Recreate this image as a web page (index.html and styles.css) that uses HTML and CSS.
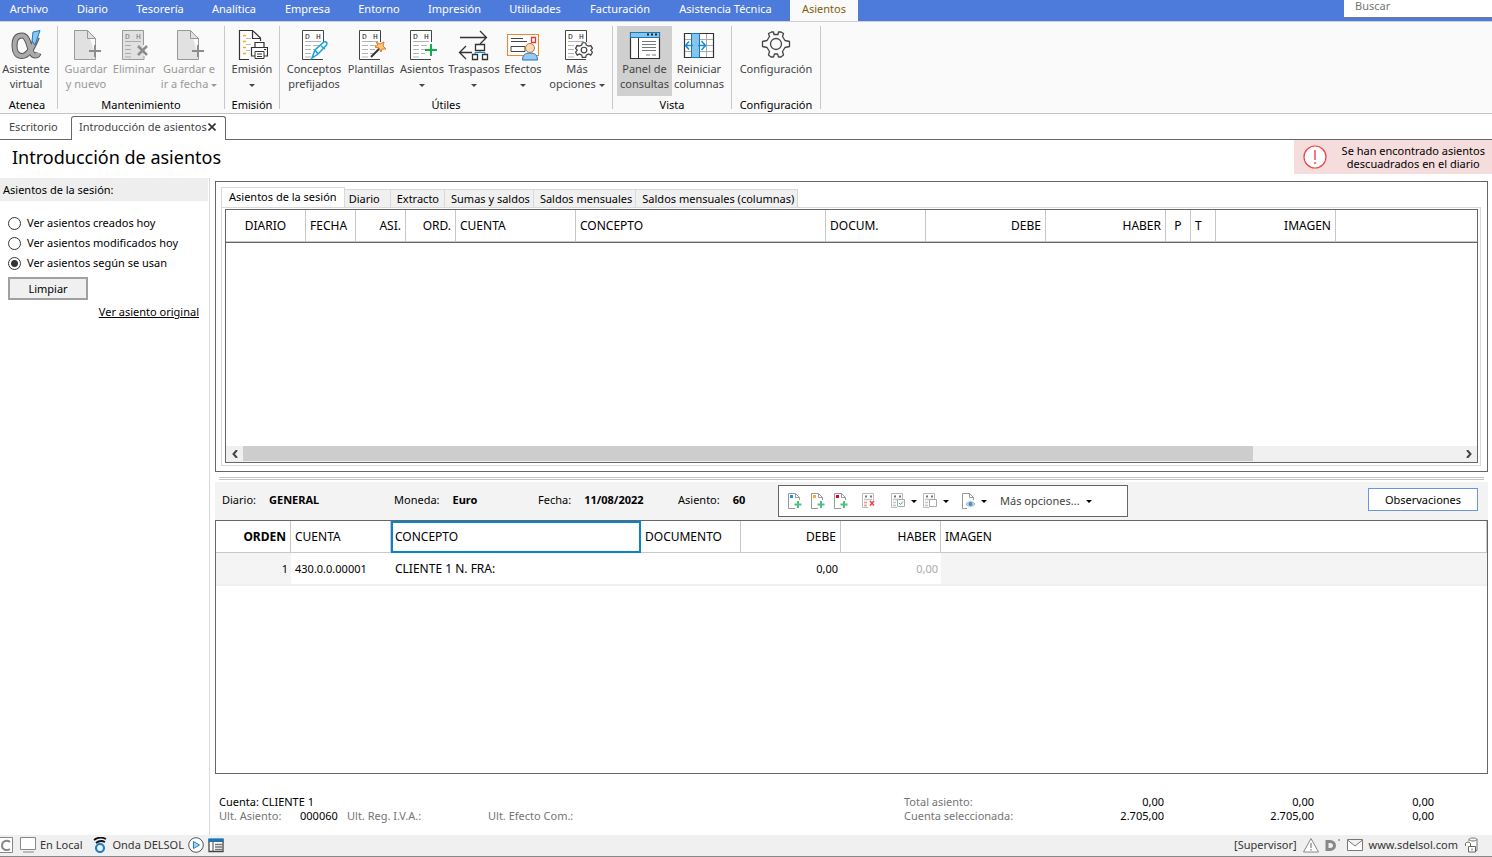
FILE: index.html
```html
<!DOCTYPE html>
<html lang="es">
<head>
<meta charset="utf-8">
<title>Introducción de asientos</title>
<link rel="stylesheet" href="styles.css">
</head>
<body>
<svg class="defs" aria-hidden="true">
  <defs>
    <symbol id="ledger" viewBox="0 0 32 32">
      <path d="M25.500 13V1.500H4.500V30.500H25" fill="#fff" stroke="#444"/>
      <path d="M7 12.500H23M7 16.500H13M15 16.500H21M7 20.500H13M15 20.500H20M7 24.500H13M15 24.500H19M7 28H13" stroke="#b4b4b4" fill="none"/>
      <text x="7" y="10" class="mini">D</text><text x="18" y="10" class="mini">H</text>
    </symbol>
    <symbol id="savedoc" viewBox="0 0 32 32">
      <path d="M17.500 1.500H4.500V30.500H25.500V27M25.500 18V9.500L17.500 1.500V9.500H25.500" fill="#e1e1e1" stroke="#999"/>
      <path d="M25 16V28M19 22H31" stroke="#8c8c8c" stroke-width="2"/>
    </symbol>
    <symbol id="gear" viewBox="0 0 32 32">
      <path d="M11.500 3H13.500L14 5.500H18L18.500 3H21L23.500 4.500L22.500 7.500L25 11.500L29.500 12.500V17.500L25 18.500L22.500 22.500L23.500 26L21 28H18.500L17.500 25H14.500L13.500 28H11L8.500 26L9.500 22.500L7 18.500L2.500 17.500V12.500L7 11.500L9.500 7.500L8.500 4.500Z" fill="none" stroke="#444" stroke-width="1.300" stroke-linejoin="round"/>
      <circle cx="16" cy="15" r="5.500" fill="none" stroke="#444" stroke-width="1.300"/>
    </symbol>
    <symbol id="newline" viewBox="0 0 18 18">
      <path d="M9.500 1.500H2.500V16.500H9M13.500 8V5.500L9.500 1.500V5.500H13.500" fill="#fff" stroke="#999"/>
      <path d="M12 9V16M8.500 12.500H15.500" stroke="#4fc07e" stroke-width="2"/>
    </symbol>
    <symbol id="rows" viewBox="0 0 18 18">
      <path d="M12.500 8V1.500H1.500V15.500H7" fill="#fff" stroke="#bbb"/>
      <path d="M4 4.500H6M9 4.500H11" stroke="#777" stroke-width="2"/>
      <path d="M3 7.500H11M3 10.500H6M3 13.500H6" stroke="#c4c4c4" stroke-width="1.500"/>
    </symbol>
  </defs>
</svg>

<nav class="menu">
  <div class="menu-items">
    <a href="#">Archivo</a><a href="#">Diario</a><a href="#">Tesorería</a><a href="#">Analítica</a><a href="#">Empresa</a><a href="#">Entorno</a><a href="#">Impresión</a><a href="#">Utilidades</a><a href="#">Facturación</a><a href="#">Asistencia Técnica</a><a href="#" class="current">Asientos</a>
  </div>
  <input class="search" type="text" placeholder="Buscar" aria-label="Buscar">
</nav>

<div class="ribbon">
  <section class="group g-atenea">
    <div class="tools">
      <button class="tool"><svg viewBox="0 0 32 32"><path d="M27 8C22 20 18 27 12 27C7 27 4.500 23 4.500 16.500C4.500 10 7 6.500 12 6.500C20 6.500 19 26.500 25 26.500C27 26.500 28 25.500 28.500 24" fill="none" stroke="#555" stroke-width="6"/><path d="M27 8C22 20 18 27 12 27C7 27 4.500 23 4.500 16.500C4.500 10 7 6.500 12 6.500C20 6.500 19 26.500 25 26.500C27 26.500 28 25.500 28.500 24" fill="none" stroke="#aaa" stroke-width="4"/><path d="M23 3L30 1.500L25 16L22 12Z" fill="#8cc6f0" stroke="#1978b8"/></svg><span>Asistente<br>virtual</span></button>
    </div>
    <h2>Atenea</h2>
  </section>
  <section class="group g-mant">
    <div class="tools">
      <button class="tool off" disabled><svg><use href="#savedoc"/></svg><span>Guardar<br>y nuevo</span></button>
      <button class="tool off" disabled><svg viewBox="0 0 32 32"><path d="M25.500 16V1.500H4.500V30.500H26V27" fill="#e1e1e1" stroke="#999"/><path d="M7 12.500H23M7 16.500H13M7 20.500H13M7 24.500H13M7 28H13" stroke="#aaa"/><text x="7" y="10" class="mini dim">D</text><text x="18" y="10" class="mini dim">H</text><path d="M20 17L29 26M29 17L20 26" stroke="#8c8c8c" stroke-width="2.500"/></svg><span>Eliminar</span></button>
      <button class="tool off" disabled><svg><use href="#savedoc"/></svg><span>Guardar e<br>ir a fecha <i class="caret"></i></span></button>
    </div>
    <h2>Mantenimiento</h2>
  </section>
  <section class="group g-emision">
    <div class="tools">
      <button class="tool"><svg viewBox="0 0 32 32"><path d="M13 30.500H3.500V1.500H16.500L24.500 9V12M16.500 1.500V9.500H24.500" fill="#fff" stroke="#333" stroke-width="1.200"/><path d="M7 6.500H10M7 12.500H10M7 18.500H10M7 24.500H10" stroke="#f5a623" stroke-width="1.500"/><path d="M10 9.500H15M10 15.500H15M10 21.500H14" stroke="#bbb"/><path d="M19 18V13.500H28V18M19 27H15.500V18.500H31.500V27H28" fill="#fff" stroke="#333" stroke-width="1.200"/><path d="M19 22.500H28V29.500H19ZM21 25H26M21 27.500H26M28 20.500H30" fill="#fff" stroke="#333"/></svg><span>Emisión<br><i class="caret"></i></span></button>
    </div>
    <h2>Emisión</h2>
  </section>
  <section class="group g-utiles">
    <div class="tools">
      <button class="tool"><svg viewBox="0 0 32 32"><use href="#ledger"/><path d="M14 29L17 21L26 13C28 12 30 14 28.500 16L20 25ZM23 17L27 20M17 21L20 25" fill="#fff" stroke="#17a2dc" stroke-width="1.500"/></svg><span>Conceptos<br>prefijados</span></button>
      <button class="tool"><svg viewBox="0 0 32 32"><use href="#ledger"/><path d="M16 28L25 19" stroke="#333" stroke-width="2"/><path d="M21 13L25 15L29 13L28 17L31 20L27 20L26 23L24 19L20 18L23 16Z" fill="#ffc680" stroke="#e8741a"/></svg><span>Plantillas</span></button>
      <button class="tool"><svg viewBox="0 0 32 32"><use href="#ledger"/><path d="M25 15V27M19 21H31" stroke="#12ad4b" stroke-width="2"/></svg><span>Asientos<br><i class="caret"></i></span></button>
      <button class="tool"><svg viewBox="0 0 32 32"><path d="M2 8.500H28M22 2L28.500 8.500L22 15M14 23.500H2M8 17L1.500 23.500L8 30" fill="none" stroke="#333" stroke-width="1.300"/><path d="M17.500 15.500H26.500V21.500H17.500ZM14.500 25.500H19.500V30.500H14.500ZM24.500 25.500H29.500V30.500H24.500Z" fill="#fff" stroke="#333" stroke-width="1.300"/><path d="M17 25V23.500H27V25M22 22V23.500" fill="none" stroke="#178bd3"/></svg><span>Traspasos<br><i class="caret"></i></span></button>
      <button class="tool"><svg viewBox="0 0 32 32"><path d="M.5 5.500H31.500V26.500H.5Z" fill="#fff" stroke="#e98a2f" stroke-width="1.200"/><path d="M4 9.500H16M4 12.500H20M4 17.500H18V22.500H4Z" fill="none" stroke="#444"/><path d="M24.500 8.500H28.500V13.500H24.500Z" fill="#fff" stroke="#e33" stroke-width="1.300"/><path d="M15.500 31C15.500 26 18 24 23 24C28 24 30.500 26 30.500 31Z" fill="#9ac8ee" stroke="#1976b8"/><circle cx="23" cy="19" r="4.500" fill="#fbd9b4" stroke="#aa7948"/></svg><span>Efectos<br><i class="caret"></i></span></button>
      <button class="tool"><svg viewBox="0 0 32 32"><use href="#ledger"/><circle cx="23" cy="20" r="7" fill="#fff"/><svg x="14" y="11" width="18" height="19" viewBox="0 0 32 32"><path d="M13 4H19L20 8L24 10L28 9L31 14L28 17L31 21L28 26L24 24L20 26L19 30H13L12 26L8 24L4 26L1 21L4 17L1 14L4 9L8 10L12 8Z" fill="#fff" stroke="#444" stroke-width="2.200"/><circle cx="16" cy="17" r="5" fill="none" stroke="#444" stroke-width="2.200"/></svg></svg><span>Más<br>opciones <i class="caret"></i></span></button>
    </div>
    <h2>Útiles</h2>
  </section>
  <section class="group g-vista">
    <div class="tools">
      <button class="tool pressed"><svg viewBox="0 0 32 32"><path d="M1.500 3.500H30.500V29.500H1.500Z" fill="#fff" stroke="#333" stroke-width="1.200"/><path d="M1.500 3.500H30.500V8.500H1.500Z" fill="#84c4ee" stroke="#1978b8"/><path d="M9.500 9V29" stroke="#333"/><path d="M18 5.500H20M22 5.500H24M26 5.500H28" stroke="#222" stroke-width="2"/><path d="M13 12.500H27M13 15.500H27M13 18.500H27M13 21.500H27M17 26H21M23 26H27" stroke="#777"/></svg><span>Panel de<br>consultas</span></button>
      <button class="tool"><svg viewBox="0 0 32 32"><path d="M1.500 4.500H30.500V28.500H1.500Z" fill="#fff" stroke="#333" stroke-width="1.200"/><path d="M2 10.500H30M2 16.500H30M2 22.500H30M23.500 5V28" stroke="#aaa"/><path d="M8.500 4.500H16.500V28.500H8.500Z" fill="#84c4ee" stroke="#1978b8"/><path d="M10 16.500H3M6 12.500L2.500 16.500L6 20.500M15 16.500H22M18.500 12L22.500 16.500L18.500 21" fill="none" stroke="#178bd3" stroke-width="1.500"/></svg><span>Reiniciar<br>columnas</span></button>
    </div>
    <h2>Vista</h2>
  </section>
  <section class="group g-config">
    <div class="tools">
      <button class="tool"><svg><use href="#gear"/></svg><span>Configuración</span></button>
    </div>
    <h2>Configuración</h2>
  </section>
</div>

<div class="doc-tabs">
  <a href="#" class="doc-tab">Escritorio</a>
  <div class="doc-tab active"><span>Introducción de asientos</span><button class="close" aria-label="Cerrar"><svg viewBox="0 0 8 8"><path d="M.5 .5L7.500 7.500M7.500 .5L.5 7.500" stroke="#333" stroke-width="1.600"/></svg></button></div>
  <div class="doc-rest"></div>
</div>

<header class="heading">
  <h1>Introducción de asientos</h1>
  <div class="alert" role="alert">
    <svg viewBox="0 0 24 24"><circle cx="12" cy="12" r="11" fill="#fff" stroke="#f0443e" stroke-width="1.200"/><path d="M12 5V15M12 17V19" stroke="#f0443e" stroke-width="1.400"/></svg>
    <p>Se han encontrado asientos<br>descuadrados en el diario</p>
  </div>
</header>

<div class="workspace">
  <aside class="side">
    <h2>Asientos de la sesión:</h2>
    <div class="options">
      <label><input type="radio" name="ver">Ver asientos creados hoy</label>
      <label><input type="radio" name="ver">Ver asientos modificados hoy</label>
      <label><input type="radio" name="ver" checked>Ver asientos según se usan</label>
    </div>
    <button class="clear">Limpiar</button>
    <a class="original" href="#">Ver asiento original</a>
  </aside>

  <main>
    <section class="session">
      <div class="tabs">
        <button class="on">Asientos de la sesión</button><button class="t-diario">Diario</button><button class="t-extracto">Extracto</button><button>Sumas y saldos</button><button>Saldos mensuales</button><button>Saldos mensuales (columnas)</button>
      </div>
      <div class="tab-page">
        <div class="grid-frame">
          <table class="grid">
            <colgroup><col class="c80"><col class="c50"><col class="c50"><col class="c50"><col class="c120"><col class="c250"><col class="c100"><col class="c120"><col class="c120"><col class="c25"><col class="c25"><col class="c120"><col></colgroup>
            <thead><tr><th class="mid">DIARIO</th><th>FECHA</th><th class="num">ASI.</th><th class="num">ORD.</th><th>CUENTA</th><th>CONCEPTO</th><th>DOCUM.</th><th class="num">DEBE</th><th class="num">HABER</th><th class="mid">P</th><th>T</th><th class="num">IMAGEN</th><th class="last"></th></tr></thead>
          </table>
          <div class="scroll">
            <button aria-label="Izquierda"><svg viewBox="0 0 8 8"><path d="M6 0L2.500 4L6 8" fill="none" stroke="#444" stroke-width="2"/></svg></button>
            <div class="track"><div class="thumb"></div></div>
            <button aria-label="Derecha"><svg viewBox="0 0 8 8"><path d="M2 0L5.500 4L2 8" fill="none" stroke="#444" stroke-width="2"/></svg></button>
          </div>
        </div>
      </div>
    </section>

    <div class="splitter"></div>

    <section class="entry-bar">
      <dl>
        <div><dt>Diario:</dt><dd>GENERAL</dd></div>
        <div><dt>Moneda:</dt><dd>Euro</dd></div>
        <div><dt>Fecha:</dt><dd>11/08/2022</dd></div>
        <div><dt>Asiento:</dt><dd>60</dd></div>
      </dl>
      <div class="toolbar">
        <button aria-label="Nuevo apunte"><svg viewBox="0 0 18 18"><use href="#newline"/><path d="M4 3H7V6H4Z" fill="#159ae5"/></svg></button>
        <button aria-label="Insertar apunte"><svg viewBox="0 0 18 18"><use href="#newline"/><path d="M4 3H7V6H4Z" fill="#f5ae30"/></svg></button>
        <button aria-label="Duplicar apunte"><svg viewBox="0 0 18 18"><use href="#newline"/><path d="M4 3H7V6H4Z" fill="#e2001a"/></svg></button>
        <button class="gap-s" aria-label="Eliminar apunte"><svg viewBox="0 0 18 18"><use href="#rows"/><path d="M3 10.500H6M3 13.500H6" stroke="#f59a9a" stroke-width="1.500"/><path d="M9 9L13 13.500M13 9L9 13.500" stroke="#e84545" stroke-width="1.500"/></svg></button>
        <button class="gap-s" aria-label="Marcar"><svg viewBox="0 0 18 18"><use href="#rows"/><path d="M7.500 7.500H14.500V14.500H7.500Z" fill="#fff" stroke="#aaa"/><path d="M9 11L10.500 12.500L13 9.500" fill="none" stroke="#35b36a"/></svg><i class="caret"></i></button>
        <button aria-label="Desmarcar"><svg viewBox="0 0 18 18"><use href="#rows"/><path d="M7.500 7.500H14.500V14.500H7.500Z" fill="#fff" stroke="#aaa"/></svg><i class="caret"></i></button>
        <button class="gap-s" aria-label="Ver documento"><svg viewBox="0 0 18 18"><path d="M7 16.500H2.500V1.500H9.500L13.500 5.500V8M9.500 1.500V5.500H13.500" fill="#fff" stroke="#999"/><path d="M6 12C8.500 9 12.500 9 15 12C12.500 15 8.500 15 6 12Z" fill="#cfe2f0" stroke="#8fb5d0"/><circle cx="10.500" cy="12" r="2" fill="#4a8abf"/></svg><i class="caret"></i></button>
        <button class="more">Más opciones... <i class="caret"></i></button>
      </div>
      <button class="notes">Observaciones</button>
    </section>

    <section class="entry">
      <table class="grid">
        <colgroup><col class="c75"><col class="c100"><col class="c250"><col class="c100"><col class="c100"><col class="c100"><col></colgroup>
        <thead><tr><th class="num"><b>ORDEN</b></th><th>CUENTA</th><th class="focus">CONCEPTO</th><th>DOCUMENTO</th><th class="num">DEBE</th><th class="num">HABER</th><th>IMAGEN</th></tr></thead>
        <tbody><tr><td class="num shade">1</td><td class="code">430.0.0.00001</td><td>CLIENTE 1 N. FRA:</td><td></td><td class="num">0,00</td><td class="num pale">0,00</td><td class="shade"></td></tr></tbody>
      </table>
    </section>

    <section class="summary">
      <div class="account">
        <p class="strong">Cuenta: CLIENTE 1</p>
        <p class="last-refs"><span>Ult. Asiento:</span><span class="strong">000060</span><span>Ult. Reg. I.V.A.:</span><span>Ult. Efecto Com.:</span></p>
      </div>
      <table class="totals">
        <colgroup><col class="c140"><col class="c120"><col class="c150"><col class="c120"></colgroup>
        <tr><th>Total asiento:</th><td>0,00</td><td>0,00</td><td>0,00</td></tr>
        <tr><th>Cuenta seleccionada:</th><td>2.705,00</td><td>2.705,00</td><td>0,00</td></tr>
      </table>
    </section>
  </main>
</div>

<footer class="status">
  <div class="status-group">
    <svg class="s16" viewBox="0 0 16 16"><path d="M0 .5H12.500V15.500H0" fill="#fff" stroke="#888"/><path d="M10 5C7 2.500 2 4 2 8.500C2 13 7 14 10 12" fill="none" stroke="#888" stroke-width="2"/></svg>
    <svg class="s16" viewBox="0 0 16 16"><path d="M.5 .5H15.500V12.500H.5ZM3 15H14" fill="#fff" stroke="#888"/></svg>
    <span>En Local</span>
    <svg class="s16 wave" viewBox="0 0 16 16"><circle cx="8" cy="11" r="4" fill="none" stroke="#1b80d0" stroke-width="2.200"/><path d="M2 3C6 0 10 0 14 2M4 6C7 3.500 10 3.500 13 5" fill="none" stroke="#111" stroke-width="1.800"/></svg>
    <span>Onda DELSOL</span>
    <svg class="s16" viewBox="0 0 16 16"><circle cx="8" cy="8" r="7.300" fill="#fff" stroke="#555"/><path d="M5.500 4.500L11.500 8L5.500 11.500Z" fill="#a8d4f2" stroke="#1b80d0"/></svg>
    <svg class="s16" viewBox="0 0 16 16"><path d="M1 2.500H15V14.500H1Z" fill="#fff" stroke="#444" stroke-width="1.300"/><path d="M.5 1.500H15.500V5H.5Z" fill="#1976b8"/><path d="M5 5V15" stroke="#444"/><path d="M7 7.500H14M7 10H14M7 12.500H14" stroke="#777" stroke-width="1.500"/></svg>
  </div>
  <div class="status-group end">
    <span>[Supervisor]</span>
    <svg class="s16" viewBox="0 0 16 16"><path d="M8 1.500L15.500 15H.5Z" fill="#fff" stroke="#888"/><path d="M8 6V11M8 12V13.500" stroke="#888" stroke-width="1.300"/></svg>
    <svg class="s16" viewBox="0 0 16 16"><path d="M2 4.500H5C11 4.500 11 12.500 5 12.500H2Z" fill="none" stroke="#888" stroke-width="3"/><path d="M13 2H15V4H13Z" fill="#aaa"/></svg>
    <svg class="s16" viewBox="0 0 16 16"><path d="M.5 2.500H15.500V13.500H.5ZM.5 3L8 9L15.500 3" fill="#fff" stroke="#777"/></svg>
    <a href="#">www.sdelsol.com</a>
    <svg class="s16" viewBox="0 0 16 16"><path d="M5 4V2.500C5 .5 13 .5 13 2.500V13.500H11M5 2.500C6 4.500 12 4.500 13 2.500" fill="#fff" stroke="#777"/><path d="M4.500 9.500H11.500V15H4.500ZM1.500 9V7C1.500 4.500 6.500 4.500 6.500 7V9M8 11.500V13.500" fill="#fff" stroke="#666"/></svg>
  </div>
</footer>
</body>
</html>
```
FILE: styles.css
```css
* { box-sizing: border-box; }
body {
  margin: 0;
  min-height: 100vh;
  display: flex;
  flex-direction: column;
  font: 11px/14px "Noto Sans", "Open Sans", sans-serif;
  color: #000;
  background: #fff;
}
h1, h2, p, dl, dd { margin: 0; font-weight: normal; }
button, input { font: inherit; color: inherit; }
button { padding: 0; border: 0; background: none; }
a { color: inherit; text-decoration: none; }
svg { display: block; flex: none; }
table { border-collapse: separate; border-spacing: 0; table-layout: fixed; }
.defs { position: absolute; width: 0; height: 0; }
.mini { font: 8px "Liberation Mono", monospace; fill: #222; }
.mini.dim { fill: #777; }
.caret {
  display: inline-block;
  border: 3px solid transparent;
  border-top-color: currentColor;
  border-bottom: 0;
  vertical-align: middle;
}

.menu { display: flex; justify-content: space-between; height: 21px; background: #4d7bdb; }
.menu-items {
  display: grid;
  grid-template-columns: 58px 69px 66px 82px 65px 78px 73px 88px 82px 129px 68px;
  color: #fff;
  text-align: center;
  line-height: 18px;
}
.menu-items .current { background: #fafafa; color: #82600c; }
.search {
  width: 148px;
  height: 18px;
  padding: 0 11px 6px;
  border: 0;
  border-bottom: 1px solid #777;
  background: #fff;
  outline: 0;
}
.search::placeholder { color: #757575; opacity: 1; }

.ribbon {
  display: flex;
  height: 93px;
  padding: 4px 0;
  background: #fafafa;
  border-top: 1px solid #d0d0d0;
  border-bottom: 1px solid #c4c4c4;
}
.group {
  display: flex;
  flex-direction: column;
  justify-content: space-between;
  border-right: 1px solid #c8c8c8;
  text-align: center;
}
.group h2 { font-size: 11px; line-height: 8px; white-space: nowrap; }
.tools { display: grid; height: 70px; }
.g-atenea { width: 58px; }
.g-atenea .tools { grid-template-columns: 52px; }
.g-atenea h2 { width: 54px; }
.g-mant { width: 167px; }
.g-mant .tools { grid-template-columns: 50px 46px 64px; padding-left: 3px; }
.g-emision { width: 55px; }
.g-utiles { width: 333px; }
.g-utiles .tools { grid-template-columns: 62px 52px 50px 54px 44px 64px; padding-left: 3px; }
.g-vista { width: 119px; }
.g-vista .tools { grid-template-columns: 55px 54px; padding-left: 4px; }
.g-config { width: 89px; }
.tool {
  display: flex;
  flex-direction: column;
  align-items: center;
  padding-top: 3px;
  line-height: 15px;
  white-space: nowrap;
  color: #444;
}
.tool > svg { width: 32px; height: 32px; }
.tool.off { color: #999; }
.pressed { background: #d0d0d0; }

.doc-tabs { display: flex; height: 26px; padding-top: 2px; line-height: 22px; color: #444; }
.doc-tab, .doc-rest { border-bottom: 1px solid #666; }
.doc-tab { width: 71px; padding-left: 9px; }
.doc-tab.active {
  display: flex;
  align-items: center;
  justify-content: space-between;
  width: 155px;
  padding: 0 9px 3px 7px;
  border: 1px solid #666;
  border-bottom: 0;
  border-radius: 3px 3px 0 0;
}
.close svg { width: 8px; height: 8px; }
.doc-rest { flex: 1; }

.heading { display: flex; justify-content: space-between; height: 38px; }
h1 { padding-left: 12px; font-size: 18px; line-height: 34px; }
.alert {
  display: flex;
  align-items: center;
  gap: 15px;
  height: 34px;
  padding: 0 7px 0 9px;
  background: #f5dcdd;
  text-align: center;
  line-height: 13px;
}
.alert svg { width: 24px; height: 24px; }

.workspace { flex: 1; display: flex; }
.side { width: 210px; padding-right: 1px; border-right: 1px solid #d8d8d8; }
.side h2 { padding-left: 3px; font-size: 11px; line-height: 23px; background: #eee; }
.options { display: flex; flex-direction: column; padding: 12px 8px 4px; line-height: 20px; }
.options label { display: flex; align-items: center; gap: 6px; }
.options input {
  appearance: none;
  width: 13px;
  height: 13px;
  margin: 0;
  border: 1px solid #333;
  border-radius: 50%;
  background: #fff;
}
.options input:checked { background: radial-gradient(circle, #333 3px, #fff 4px); }
.clear {
  display: block;
  width: 80px;
  height: 23px;
  margin-left: 8px;
  border: 2px solid #a0a0a0;
  background: #f0f0f0;
}
.original { display: block; padding: 5px 9px 0 0; text-align: right; text-decoration: underline; }

main { flex: 1; min-width: 0; display: flex; flex-direction: column; padding: 3px 4px 0 5px; }
.session {
  flex: 1 0 291px;
  display: flex;
  flex-direction: column;
  padding: 5px 6px 5px 5px;
  border: 1px solid #666;
}
.tabs { display: flex; align-items: flex-end; }
.tabs button {
  height: 18px;
  padding: 0 3px 0 6px;
  border: 1px solid #d9d9d9;
  border-width: 1px 1px 0 0;
  background: #f0f0f0;
  white-space: nowrap;
}
.tabs .on { height: 20px; padding: 0 7px 1px; border-left-width: 1px; background: #fff; }
.tabs .t-diario { padding: 0 10px 0 4px; }
.tabs .t-extracto { padding-right: 5px; }
.tab-page {
  flex: 1;
  display: flex;
  padding: 1px 2px 2px 3px;
  border: 1px solid #d9d9d9;
}
.grid-frame { flex: 1; display: flex; flex-direction: column; justify-content: space-between; border: 1px solid #666; }
.grid { width: 100%; font-size: 12px; }
.grid th {
  height: 32px;
  padding: 0 4px;
  border-right: 1px solid #c8c8c8;
  border-bottom: 1px solid #c8c8c8;
  font-weight: normal;
  text-align: left;
}
.grid-frame .grid { border-bottom: 1px solid #666; }
.grid td { height: 33px; padding: 0 3px 0 4px; border-bottom: 2px solid #f0f0f0; }
.grid td.num, .grid .code { font-size: 11px; }
.grid .num { text-align: right; }
.grid .mid { text-align: center; }
.grid .last { border-right: 0; }
.grid .shade { background: #f4f4f4; }
.grid .pale { color: #aaa; }
.grid .focus { outline: 2px solid #0a84c8; outline-offset: -2px; }
.c25 { width: 25px; }
.c50 { width: 50px; }
.c75 { width: 75px; }
.c80 { width: 80px; }
.c100 { width: 100px; }
.c120 { width: 120px; }
.c140 { width: 140px; }
.c150 { width: 150px; }
.c250 { width: 250px; }

.scroll { display: flex; height: 16px; background: #f0f0f0; }
.scroll button { display: grid; place-items: center; width: 17px; }
.scroll svg { width: 8px; height: 8px; }
.track { flex: 1; }
.thumb { width: 83%; height: 15px; background: #cdcdcd; }

.splitter {
  height: 3px;
  margin: 5px 4px 2px;
  border: 1px solid #c4c4c4;
  border-width: 1px 0;
}

.entry-bar { display: flex; align-items: center; height: 38px; padding: 0 10px 3px 7px; background: #f3f3f3; }
.entry-bar dl { display: grid; grid-template-columns: 172px 144px 140px 100px; }
.entry-bar dl div { display: flex; gap: 13px; }
dd { font-weight: bold; }
.toolbar { display: flex; align-items: center; align-self: flex-end; width: 350px; height: 32px; padding-left: 7px; border: 1px solid #666; background: #fff; }
.toolbar button { display: flex; align-items: center; gap: 3px; padding-right: 5px; }
.toolbar svg { width: 18px; height: 18px; }
.toolbar .gap-s { padding-left: 6px; }
.toolbar .more { gap: 6px; padding-left: 8px; color: #444; }
.toolbar .caret { color: #000; }
.notes { width: 110px; height: 23px; margin-left: auto; border: 1px solid #6a94e6; background: #fff; }

.entry { flex: 1 0 254px; border: 1px solid #666; }

.summary {
  display: flex;
  align-items: flex-start;
  justify-content: space-between;
  height: 61px;
  padding: 21px 54px 0 4px;
  color: #757575;
}
.strong { color: #000; }
.last-refs { display: grid; grid-template-columns: 81px 47px 141px 100px; }
.totals { width: 530px; }
.totals th, .totals td { padding: 0; line-height: 14px; }
.totals th { font-weight: normal; text-align: left; }
.totals td { text-align: right; color: #000; }

.status {
  display: flex;
  justify-content: space-between;
  height: 22px;
  padding: 0 12px 1px 0;
  border-bottom: 1px solid #888;
  background: #f0f0f0;
  color: #333;
}
.status-group { display: flex; align-items: center; gap: 4px; }
.status-group.end { gap: 6px; }
.s16 { width: 16px; height: 16px; }
.status .wave { margin-left: 6px; }
```
